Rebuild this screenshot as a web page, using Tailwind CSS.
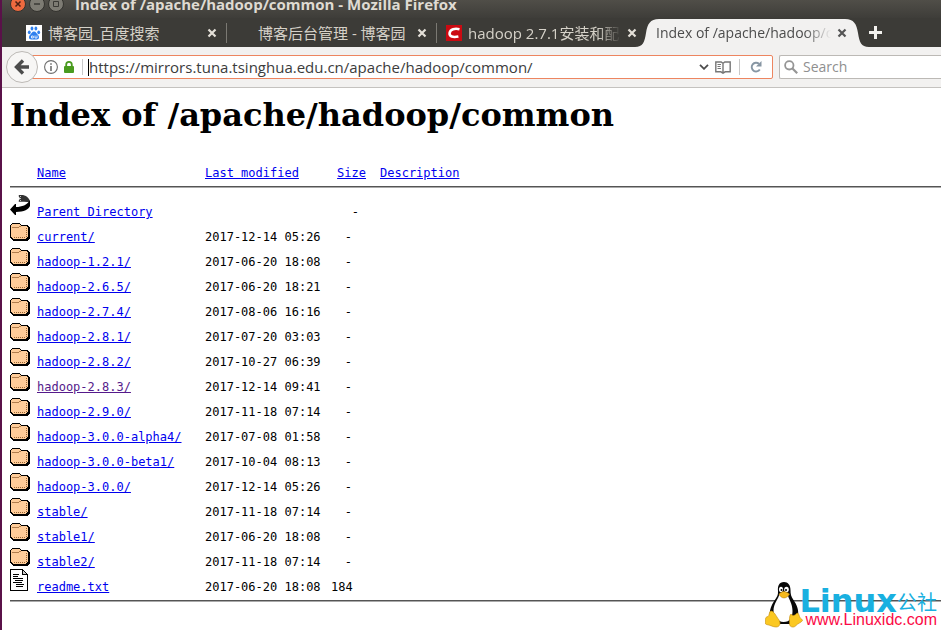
<!DOCTYPE html>
<html lang="en">
<head>
    <meta charset="UTF-8">
    <meta name="viewport" content="width=device-width, initial-scale=1.0">
    <title>Index of /apache/hadoop/common</title>
    <script src="https://cdn.jsdelivr.net/npm/@tailwindcss/browser@4"></script>
</head>
<body class="relative flex flex-col min-h-screen overflow-hidden bg-white border-l-2 border-[#5a1149] text-black">
    <!-- Window title -->
    <header class="flex items-center h-[18px] pl-2 bg-linear-to-b from-[#504e48] to-[#3e3d39]">
        <div class="flex gap-[3px] -mt-[10px]">
            <button aria-label="Close" class="block size-4">
                <svg class="size-4" viewBox="0 0 16 16"><circle cx="8" cy="8" r="7.5" fill="#ee6a3f" stroke="#33322e"/><path d="M5.5 5.5l5 5M10.500 5.500l-5 5" stroke="#4a2014" stroke-width="1.500"/></svg>
            </button>
            <button aria-label="Minimize" class="block size-4">
                <svg class="size-4" viewBox="0 0 16 16"><circle cx="8" cy="8" r="7.5" fill="#7d7b73" stroke="#33322e"/><path d="M5 8h6" stroke="#3a3935" stroke-width="1.500"/></svg>
            </button>
            <button aria-label="Maximize" class="block size-4">
                <svg class="size-4" viewBox="0 0 16 16"><circle cx="8" cy="8" r="7.5" fill="#7d7b73" stroke="#33322e"/><path d="M5.500 5.500h5v5h-5z" fill="none" stroke="#3a3935"/></svg>
            </button>
        </div>
        <div class="ml-[11px] -mt-[10px] whitespace-nowrap font-['Open_Sans',sans-serif] font-bold text-[15px] leading-5 text-[#dfdbd2]">Index of /apache/hadoop/common - Mozilla Firefox</div>
    </header>

    <!-- Tabs -->
    <nav class="flex items-end h-[29px] pl-[15px] bg-[#3c3b37] font-['Open_Sans','Noto_Sans_CJK_SC',sans-serif] text-sm text-[#d5d1c8]">
        <div class="flex items-center w-[210px] h-7 pl-[9px] pr-[10px] relative">
            <svg class="size-4 shrink-0" viewBox="0 0 16 16"><path fill="#fff" d="M0 0h16v16H0z"/><g fill="#2f80ee"><ellipse cx="3.300" cy="7.300" rx="1.400" ry="1.900"/><ellipse cx="6" cy="3.500" rx="1.400" ry="2"/><ellipse cx="9.900" cy="3.500" rx="1.400" ry="2"/><ellipse cx="12.700" cy="7.300" rx="1.400" ry="1.900"/><path d="M8 6.500c2 0 2.500 2 4 3.500s1.500 4.500-1.200 4.500c-1.200 0-4.400 0-5.600 0C2.500 14.500 2.500 11.500 4 10s2-3.500 4-3.500z"/></g><path d="M5.500 11h1.800v2H5.500zM9 10.500V13h2v-2.500" fill="none" stroke="#fff" stroke-width=".8"/></svg>
            <a href="#" class="flex-1 ml-[6px] overflow-hidden whitespace-nowrap text-[15px] leading-6">博客园_百度搜索</a>
            <button aria-label="Close tab" class="size-[10px]"><svg class="size-[10px]" viewBox="0 0 10 10"><path d="M1.500 1.500l7 7M8.500 1.500l-7 7" stroke="#e4e0d8" stroke-width="2.200"/></svg></button>
            <span class="absolute right-0 top-1 h-5 border-r border-[#7b7973]"></span>
        </div>
        <div class="flex items-center w-[210px] h-7 pl-[9px] pr-[10px] relative">
            <span class="size-4 shrink-0"></span>
            <a href="#" class="flex-1 ml-[6px] overflow-hidden whitespace-nowrap text-[15px] leading-6">博客后台管理 - 博客园</a>
            <button aria-label="Close tab" class="size-[10px]"><svg class="size-[10px]" viewBox="0 0 10 10"><path d="M1.500 1.500l7 7M8.500 1.500l-7 7" stroke="#e4e0d8" stroke-width="2.200"/></svg></button>
            <span class="absolute right-0 top-1 h-5 border-r border-[#7b7973]"></span>
        </div>
        <div class="flex items-center w-[210px] h-7 pl-[9px] pr-[10px]">
            <svg class="size-4 shrink-0" viewBox="0 0 16 16"><path fill="#cb0a12" d="M0 0h16v16H0z"/><path d="M13.500 4.200C9 3.200 4.200 4 3.600 8c-.5 3.600 3.400 4.600 8.800 3.500" fill="none" stroke="#fff" stroke-width="2.600"/></svg>
            <a href="#" class="flex-1 ml-[6px] mr-[6px] overflow-hidden whitespace-nowrap text-[15px] leading-6 mask-r-from-85%">hadoop 2.7.1安装和配置</a>
            <button aria-label="Close tab" class="size-[10px]"><svg class="size-[10px]" viewBox="0 0 10 10"><path d="M1.500 1.500l7 7M8.500 1.500l-7 7" stroke="#e4e0d8" stroke-width="2.200"/></svg></button>
        </div>
        <div class="flex items-center w-[210px] h-7 pl-[9px] pr-[10px] relative text-[#4c4c4c]">
            <svg class="absolute -left-3 top-0 w-6 h-7" viewBox="0 0 24 28"><path fill="#f2f1f0" d="M0 28C8 28 9.500 23 11 14 12.500 5 15 0 24 0v28z"/></svg>
            <span class="absolute inset-x-3 inset-y-0 bg-[#f2f1f0]"></span>
            <svg class="absolute -right-3 top-0 w-6 h-7" viewBox="0 0 24 28"><path fill="#f2f1f0" d="M24 28C16 28 14.500 23 13 14 11.500 5 9 0 0 0v28z"/></svg>
            <a href="#" class="relative flex-1 mr-[6px] overflow-hidden whitespace-nowrap leading-6 mask-r-from-85%">Index of /apache/hadoop/common</a>
            <button aria-label="Close tab" class="relative size-[10px]"><svg class="size-[10px]" viewBox="0 0 10 10"><path d="M1.500 1.500l7 7M8.500 1.500l-7 7" stroke="#555" stroke-width="2.200"/></svg></button>
        </div>
        <button aria-label="New tab" class="ml-3 mb-2 size-[13px]"><svg class="size-[13px]" viewBox="0 0 13 13"><path d="M6.500 0v13M0 6.500h13" stroke="#f2f1ee" stroke-width="3"/></svg></button>
    </nav>

    <!-- Address bar -->
    <div class="flex items-center h-[41px] pl-1 bg-[#f2f1f0] border-b border-[#c4c2bf] font-['Open_Sans',sans-serif] text-[15px]">
        <button aria-label="Back" class="relative z-10 size-8 shrink-0">
            <svg class="size-8" viewBox="0 0 32 32"><circle cx="16" cy="16" r="15.500" fill="#f7f6f5" stroke="#bcb9b5"/><path d="M23 16H11.500M17 9.500L10.500 16l6.500 6.500" fill="none" stroke="#4c4c4c" stroke-width="3.400"/></svg>
        </button>
        <div class="flex items-center flex-1 min-w-0 h-6 -ml-[7px] pl-[12px] pr-[10px] bg-white border border-[#ed8560] rounded-r-xs">
            <svg class="size-[14px] shrink-0" viewBox="0 0 14 14"><circle cx="7" cy="7" r="6.400" fill="none" stroke="#6e6e6e" stroke-width="1.100"/><path d="M6.200 3.200h1.600v1.600H6.200zM6.200 6h1.600v5H6.200z" fill="#6e6e6e"/></svg>
            <svg class="w-[10px] h-3 ml-[6px] shrink-0" viewBox="0 0 10 12"><path d="M2.200 6V3.700a2.800 2.800 0 0 1 5.600 0V6" fill="none" stroke="#4a9b1f" stroke-width="1.800"/><rect y="5" width="10" height="7" rx="1" fill="#4a9b1f"/></svg>
            <span class="ml-2 h-4 border-l border-[#c8c8c8]"></span>
            <span class="ml-[5px] h-[17px] border-l border-black"></span>
            <input type="text" aria-label="Address" value="https://mirrors.tuna.tsinghua.edu.cn/apache/hadoop/common/" class="flex-1 min-w-0 h-5 text-[#3c3c3c] outline-none">
            <button aria-label="Show history" class="flex w-[10px]"><svg class="w-[10px] h-[6px]" viewBox="0 0 10 6"><path d="M1 .8l4 4 4-4" fill="none" stroke="#4c4c4c" stroke-width="1.800"/></svg></button>
            <button aria-label="Reader view" class="flex w-4 ml-[6px]"><svg class="w-4 h-[13px]" viewBox="0 0 16 13"><path d="M.8 1h5.400L8 2.300 9.800 1h5.400v9.800h-5L8 12.200l-2.200-1.400h-5zM8 2.300v9" fill="none" stroke="#777" stroke-width="1.400"/><path d="M2.500 3.500H6M2.500 5.500h3M2.500 7.500H6" stroke="#777"/></svg></button>
            <span class="ml-2 h-4 border-l border-[#c8c8c8]"></span>
            <button aria-label="Reload" class="flex w-3 ml-[10px]"><svg class="size-3" viewBox="0 0 12 12"><path d="M9 2.800A4.400 4.400 0 1 0 9.800 8.500" fill="none" stroke="#8796a3" stroke-width="1.900"/><path d="M11.500 0v5.500H6z" fill="#8796a3"/></svg></button>
        </div>
        <div class="flex items-center w-[162px] shrink-0 h-6 ml-[6px] pl-1 bg-white border border-r-0 border-[#bcb9b5] rounded-l-xs">
            <svg class="size-[14px] shrink-0" viewBox="0 0 14 14"><circle cx="5.300" cy="5.300" r="4.200" fill="none" stroke="#959595" stroke-width="1.800"/><path d="M8.500 8.500l4.700 4.700" stroke="#959595" stroke-width="2.200"/></svg>
            <input type="search" aria-label="Search" placeholder="Search" class="flex-1 min-w-0 h-5 ml-[5px] outline-none text-sm placeholder:text-[#8f8f8f]">
        </div>
    </div>

    <!-- Directory listing -->
    <main class="flex-1 pt-2 pl-2">
        <h1 class="mb-5 font-['DejaVu_Serif',serif] font-bold text-[32px] leading-[39px] whitespace-nowrap">Index of /apache/hadoop/common</h1>
        <table class="w-full table-fixed text-left font-['DejaVu_Sans_Mono',monospace] text-xs leading-[14px] whitespace-nowrap">
            <colgroup>
                <col class="w-[27px]"><col class="w-[168px]"><col class="w-[126px]"><col class="w-[35px]"><col>
            </colgroup>
            <thead>
                <tr class="h-[25px] align-bottom text-[#0000ee]">
                    <td></td>
                    <th class="font-normal"><a class="underline" href="#">Name</a></th>
                    <th class="font-normal"><a class="underline" href="#">Last modified</a></th>
                    <th class="font-normal text-right"><a class="underline" href="#">Size</a></th>
                    <th class="font-normal pl-[14px]"><a class="underline" href="#">Description</a></th>
                </tr>
                <tr><td colspan="5" class="py-[6px]"><hr class="h-[2px] border-t border-b border-t-[#555] border-b-[#aaa]"></td></tr>
            </thead>
            <tbody id="listing"></tbody>
        </table>
        <hr class="mt-[6px] h-[2px] border-t border-b border-t-[#555] border-b-[#aaa]">
    </main>

    <!-- Site badge -->
    <a href="#" class="absolute right-1 bottom-0 flex items-end whitespace-nowrap">
        <svg class="w-[38px] h-[46px] mb-[2px]" viewBox="0 0 38 46">
            <path d="M19 0c-5 0-6.500 4-6 9 .3 4-1 6-3.500 9.500C6.500 23 4 29 5 34l7 8h14l7-7c1-7-1-12-4.500-17C26 14.500 25.500 12 25.500 8 25.500 3 23 0 19 0z" fill="#080808"/>
            <path d="M14.500 12c-1 5-6 9-6 17 0 5 4 11 10 11 7 0 9-5 9-11 0-8-4-12-5-17z" fill="#fff"/>
            <ellipse cx="16" cy="7.500" rx="2" ry="2.800" fill="#fff"/><ellipse cx="21.500" cy="7.500" rx="2.300" ry="2.800" fill="#fff"/>
            <circle cx="16.500" cy="8" r="1" fill="#000"/><circle cx="21" cy="8" r="1" fill="#000"/>
            <path d="M14 12c2-2 4-2.500 5-2.500s4 1 5.500 2.500c-.5 2-3.500 4-5.500 4s-4.500-2-5-4z" fill="#f5b91c" stroke="#a9780b" stroke-width=".5"/>
            <path d="M6 29c3 0 5 5 8 9 2 3 1 7-3 7-3 0-6-2-9.500-2.500-2-.5-1-3-1-5 0-2 .5-2.500 2.500-3 1.500-.5 1-5.500 3-5.500z" fill="#fbc822" stroke="#c58a0a" stroke-width=".6"/>
            <path d="M26 32c1 2 4 2 6-1 2 0 2 3 3 4.500s2.500 2 2.500 3c-1 2-5 3-7 5.500-2 2-6 1-6-2 0-4-.5-8 1.500-10z" fill="#fbc822" stroke="#c58a0a" stroke-width=".6"/>
        </svg>
        <span class="-ml-1 pb-[2px] flex flex-col">
            <span class="flex items-end text-[#19b0e0]">
                <b class="font-['DejaVu_Sans',sans-serif] text-[32px] leading-[22px]">Linux</b>
                <span class="font-['Noto_Sans_CJK_SC',sans-serif] text-xl leading-5">公社</span>
            </span>
            <span class="text-right font-['Liberation_Sans',sans-serif] text-base leading-4 text-[#fb0a46]">www.Linuxidc.com</span>
        </span>
    </a>

    <svg class="hidden">
        <symbol id="folder" viewBox="0 0 20 22">
            <g shape-rendering="crispEdges">
                <path d="M2 4h8v1h1v1h7v1h1v1h1v12h-1v1h-1v1H3v-1H2v-1H1v-1H0V6h1V5h1z" fill="#000"/>
                <path d="M2 5h8v1h1v1h6v1h1v10h-1v1h-1v1H3v-1H2v-1H1V6h1z" fill="#fc9"/>
                <path d="M2 8h7v1H2zM9 7h2v1H9z" fill="#b07c4c"/>
                <path d="M16.500 9v9M4 18.500h12" stroke="#963" stroke-dasharray="1 1"/>
            </g>
        </symbol>
        <symbol id="back" viewBox="0 0 20 22">
            <path d="M8 1h5c4 1 7 4 7 7h-3c-3 0-6-.5-9 0l2-3.500z" fill="#333"/>
            <path d="M8.500 1v7M10.500 2v6" stroke="#fff" stroke-dasharray="1 1" opacity=".7"/>
            <path d="M20 6v6c-1 3-6 6-14 6v3H5l-5-5.500L5 10h1v3c6 0 11-2 14-7z" fill="#000"/>
        </symbol>
        <symbol id="text" viewBox="0 0 20 22">
            <g shape-rendering="crispEdges">
                <path d="M0 0h13v1h1v1h1v1h1v1h1v1h1v17H0z" fill="#000"/>
                <path d="M1 1h11v5h5v15H1z" fill="#fff"/>
                <path d="M13 2h1v1h1v1h1v1h-3z" fill="#ccc"/>
                <path d="M3 5.500h6M3 7.500h5M3 9.500h10M5 11.500h8M3 13.500h9M6 15.500h8M6 17.500h7" stroke="#000"/>
            </g>
        </symbol>
    </svg>

    <script>
        const files = [
            ["current/", "2017-12-14 05:26"],
            ["hadoop-1.2.1/", "2017-06-20 18:08"],
            ["hadoop-2.6.5/", "2017-06-20 18:21"],
            ["hadoop-2.7.4/", "2017-08-06 16:16"],
            ["hadoop-2.8.1/", "2017-07-20 03:03"],
            ["hadoop-2.8.2/", "2017-10-27 06:39"],
            ["hadoop-2.8.3/", "2017-12-14 09:41"],
            ["hadoop-2.9.0/", "2017-11-18 07:14"],
            ["hadoop-3.0.0-alpha4/", "2017-07-08 01:58"],
            ["hadoop-3.0.0-beta1/", "2017-10-04 08:13"],
            ["hadoop-3.0.0/", "2017-12-14 05:26"],
            ["stable/", "2017-11-18 07:14"],
            ["stable1/", "2017-06-20 18:08"],
            ["stable2/", "2017-11-18 07:14"],
            ["readme.txt", "2017-06-20 18:08", "184", "text"]
        ];
        const visited = "hadoop-2.8.3/";

        function row(name, date, size, icon) {
            const color = name === visited ? "text-[#551a8b]" : "text-[#0000ee]";
            const pad = icon === "back" ? "pr-[7px]" : "pr-[14px]";
            return `<tr class="h-[25px] align-baseline">
                <td><svg class="inline-block align-baseline w-5 h-[22px]"><use href="#${icon}"/></svg></td>
                <td><a href="#" class="underline ${color}">${name}</a></td>
                <td>${date}</td>
                <td class="text-right ${pad}">${size}</td>
                <td></td>
            </tr>`;
        }

        document.getElementById("listing").innerHTML = row("Parent Directory", "", "-", "back") +
            files.map(([name, date, size = "-", icon = "folder"]) => row(name, date, size, icon)).join("");
    </script>
</body>
</html>
